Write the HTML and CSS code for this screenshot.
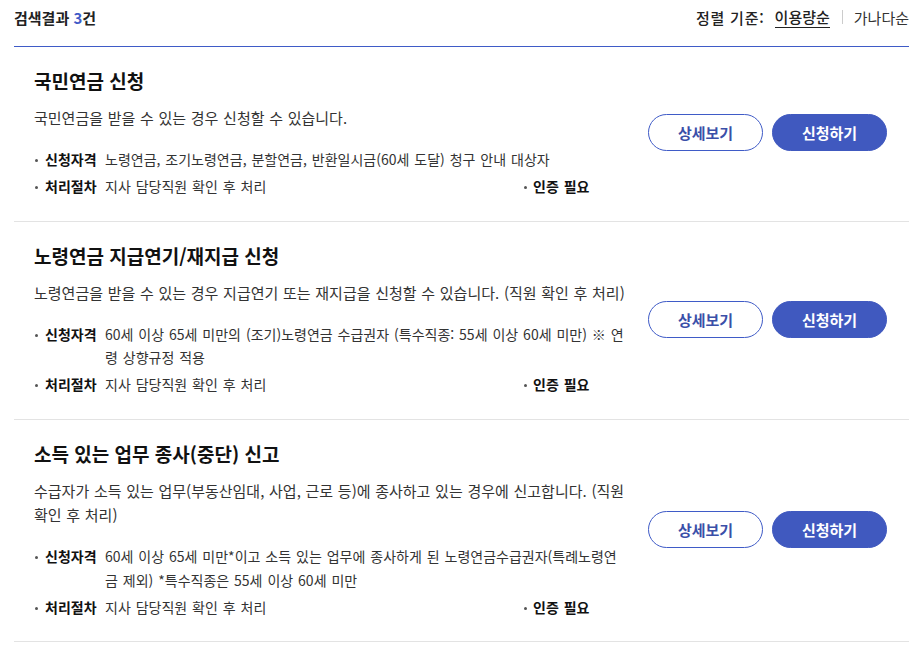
FILE: index.html
```html
<!DOCTYPE html>
<html lang="ko">
<head>
<meta charset="utf-8">
<link rel="stylesheet" href="styles.css">
</head>
<body>
<div class="wrap">
  <div class="head">
    <div class="count">검색결과 <span class="num">3</span>건</div>
    <div class="sort">
      <span class="sort-label">정렬 기준:</span>
      <span class="sort-on">이용량순</span>
      <span class="sort-sep"></span>
      <span class="sort-off">가나다순</span>
    </div>
  </div>

  <div class="item">
    <div class="body">
      <h3 class="title">국민연금 신청</h3>
      <p class="desc">국민연금을 받을 수 있는 경우 신청할 수 있습니다.</p>
      <ul class="meta">
        <li class="row"><span class="dot"></span><span class="lbl">신청자격</span><span class="val">노령연금, 조기노령연금, 분할연금, 반환일시금(60세 도달) 청구 안내 대상자</span></li>
        <li class="row"><span class="dot"></span><span class="lbl">처리절차</span><span class="val">지사 담당직원 확인 후 처리</span><span class="auth"><span class="dot"></span>인증 필요</span></li>
      </ul>
    </div>
    <div class="btns">
      <button class="btn btn-line">상세보기</button>
      <button class="btn btn-fill">신청하기</button>
    </div>
  </div>

  <div class="item">
    <div class="body">
      <h3 class="title">노령연금 지급연기/재지급 신청</h3>
      <p class="desc">노령연금을 받을 수 있는 경우 지급연기 또는 재지급을 신청할 수 있습니다. (직원 확인 후 처리)</p>
      <ul class="meta">
        <li class="row"><span class="dot"></span><span class="lbl">신청자격</span><span class="val">60세 이상 65세 미만의 (조기)노령연금 수급권자 (특수직종: 55세 이상 60세 미만) ※ 연령 상향규정 적용</span></li>
        <li class="row"><span class="dot"></span><span class="lbl">처리절차</span><span class="val">지사 담당직원 확인 후 처리</span><span class="auth"><span class="dot"></span>인증 필요</span></li>
      </ul>
    </div>
    <div class="btns">
      <button class="btn btn-line">상세보기</button>
      <button class="btn btn-fill">신청하기</button>
    </div>
  </div>

  <div class="item">
    <div class="body">
      <h3 class="title">소득 있는 업무 종사(중단) 신고</h3>
      <p class="desc">수급자가 소득 있는 업무(부동산임대, 사업, 근로 등)에 종사하고 있는 경우에 신고합니다. (직원 확인 후 처리)</p>
      <ul class="meta">
        <li class="row"><span class="dot"></span><span class="lbl">신청자격</span><span class="val">60세 이상 65세 미만*이고 소득 있는 업무에 종사하게 된 노령연금수급권자(특례노령연금 제외) *특수직종은 55세 이상 60세 미만</span></li>
        <li class="row"><span class="dot"></span><span class="lbl">처리절차</span><span class="val">지사 담당직원 확인 후 처리</span><span class="auth"><span class="dot"></span>인증 필요</span></li>
      </ul>
    </div>
    <div class="btns">
      <button class="btn btn-line">상세보기</button>
      <button class="btn btn-fill">신청하기</button>
    </div>
  </div>
</div>
</body>
</html>
```

FILE: styles.css
```css
* { box-sizing: border-box; }
html, body { margin: 0; padding: 0; background: #fff; }
body {
  font-family: "Noto Sans CJK KR", "Noto Sans", sans-serif;
  color: #222;
}
.wrap { padding: 0 15px 0 14px; }
.head {
  display: flex;
  justify-content: space-between;
  align-items: center;
  height: 47px;
  padding-bottom: 12px;
  border-bottom: 1px solid #3f5bc7;
}
.count { font-size: 15px; font-weight: 700; color: #222; }
.count .num { color: #3f5bc7; }
.sort { display: flex; align-items: center; font-size: 15px; color: #222; }
.sort-label { font-weight: 500; margin-right: 10px; letter-spacing: 0.8px; }
.sort-on { font-weight: 500; border-bottom: 1px solid #222; line-height: 20px; }
.sort-sep { width: 1px; height: 14px; background: #ccc; margin: 0 11px 0 12px; }
.sort-off { color: #333; }

.item {
  display: flex;
  align-items: center;
  padding: 20px 22px 22px 20px;
  border-bottom: 1px solid #e3e3e3;
}
.body { flex: 1; min-width: 0; padding-right: 21px; }
.title { margin: 0; font-size: 19px; font-weight: 700; color: #111; line-height: 28px; }
.desc { margin: 11px 0 0; font-size: 15px; line-height: 24px; color: #333; word-spacing: 0.5px; }
.meta { list-style: none; margin: 18px 0 0; padding: 0; }
.row {
  display: flex;
  align-items: flex-start;
  font-size: 14px;
  line-height: 1.7;
  color: #333;
  margin-top: 3px;
  word-spacing: 1px;
}
.row:first-child { margin-top: 0; }
.val { flex: 1; min-width: 0; }
.dot {
  display: inline-block;
  width: 3px; height: 3px;
  border-radius: 50%;
  background: #555;
  margin: 11px 7px 0 1px;
  flex: none;
}
.lbl { font-weight: 700; color: #111; flex: none; width: 60px; }
.auth {
  flex: none;
  display: flex;
  align-items: flex-start;
  font-weight: 700;
  color: #111;
  margin-left: auto;
  margin-right: 37px;
  width: 67px;
}
.auth .dot { margin-right: 6px; }
.btns { display: flex; gap: 9px; flex: none; }
.btn {
  width: 115px;
  height: 37px;
  border-radius: 19px;
  font-family: inherit;
  font-size: 15px;
  font-weight: 700;
  cursor: pointer;
}
.btn-line { background: #fff; border: 1px solid #3f5bc7; color: #3a4fa8; }
.btn-fill { background: #4059bf; border: 1px solid #4059bf; color: #fff; }
```
